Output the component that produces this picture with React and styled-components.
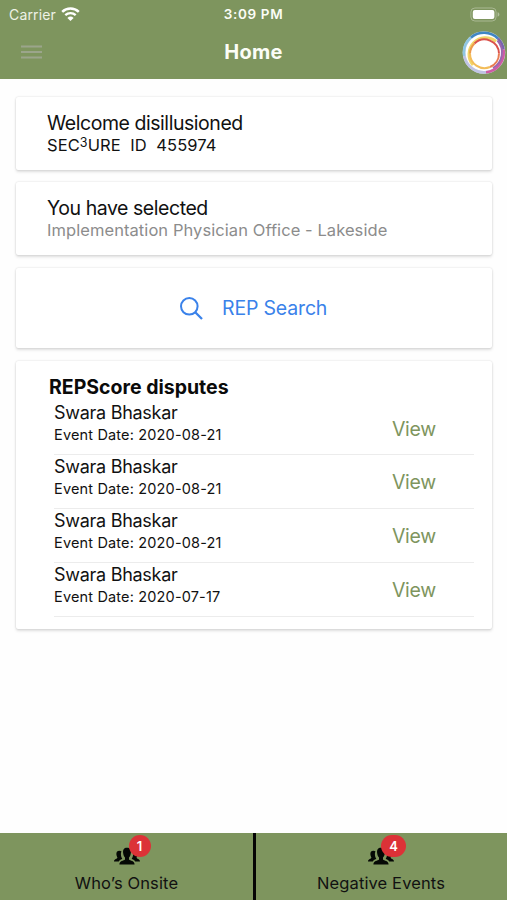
import React, { Component } from 'react'
import styled, { createGlobalStyle } from 'styled-components'

// MOCK-DATA
const disputes = [
  { id: 1, name: 'Swara Bhaskar', date: '2020-08-21' },
  { id: 2, name: 'Swara Bhaskar', date: '2020-08-21' },
  { id: 3, name: 'Swara Bhaskar', date: '2020-08-21' },
  { id: 4, name: 'Swara Bhaskar', date: '2020-07-17' },
]

const GlobalStyle = createGlobalStyle`
  * {
    box-sizing: border-box;
  }
  body {
    margin: 0;
    background: #fefefe;
    color: #111;
    font-family: Inter, 'Liberation Sans', sans-serif;
  }
`

const Screen = styled.div`
  display: flex;
  flex-direction: column;
  width: 100%;
  height: 100vh;
  overflow: hidden;
`

const Header = styled.header`
  height: 79px;
  flex: none;
  background: #7e955e;
  color: #fbfdf6;
`

const StatusBar = styled.div`
  display: grid;
  grid-template-columns: 1fr auto 1fr;
  align-items: center;
  height: 27px;
  line-height: 27px;
`

const Carrier = styled.div`
  display: flex;
  align-items: center;
  gap: 5px;
  padding-left: 9px;
  font-size: 14px;
  letter-spacing: 0.15px;
  color: #eef2e6;
`

const Time = styled.div`
  padding-top: 1px;
  font-size: 13.5px;
  font-weight: 600;
  letter-spacing: 0.65px;
`

const BatteryWrap = styled.div`
  display: flex;
  justify-content: flex-end;
  padding-right: 6px;
`

const NavBar = styled.div`
  display: grid;
  grid-template-columns: 1fr auto 1fr;
  align-items: center;
  height: 50px;
`

const MenuIcon = styled.svg`
  display: block;
  margin-left: 20px;
`

const Title = styled.h1`
  margin: 0;
  font-size: 20px;
  font-weight: 700;
  line-height: 24px;
  letter-spacing: 0.3px;
`

const Ring = styled.svg`
  display: block;
  justify-self: end;
  margin: 1px 1px 0 0;
`

const Content = styled.main`
  flex: 1;
  display: flex;
  flex-direction: column;
  padding: 18px 15px 0 16px;
`

const Card = styled.section`
  height: ${props => props.height}px;
  margin-bottom: ${props => props.gap || 0}px;
  padding: ${props => props.pad || '0'};
  background: #fff;
  border-radius: 2px;
  box-shadow: 0 0 2px rgba(0, 0, 0, 0.16), 0 2px 3px rgba(0, 0, 0, 0.12);
`

const Heading = styled.div`
  font-size: 19.5px;
  line-height: 24px;
  letter-spacing: -0.45px;
`

const Secure = styled.div`
  font-size: 16.5px;
  line-height: 20px;
  letter-spacing: 0.1px;
  white-space: pre;

  sup {
    font-size: 12.5px;
    line-height: 0;
    vertical-align: 4px;
  }
`

const Location = styled.div`
  font-size: 16.5px;
  line-height: 20px;
  letter-spacing: 0.07px;
  color: #8c8c8c;
`

const SearchLink = styled.div`
  display: flex;
  align-items: center;
  height: 100%;
  padding-left: 163px;
  gap: 18px;
  font-size: 19.5px;
  letter-spacing: -0.17px;
  color: #3a82ea;
`

const DisputeTitle = styled.h2`
  margin: 0 0 2px 33px;
  font-size: 19.5px;
  font-weight: 700;
  line-height: 24px;
  color: #0a0a0a;
`

const DisputeRow = styled.div`
  display: flex;
  justify-content: space-between;
  height: 53.9px;
  margin: 0 18px 0 38px;
  border-bottom: 1px solid #ececec;
`

const DisputeName = styled.div`
  padding-top: 1px;
  font-size: 18px;
  line-height: 22px;
  letter-spacing: -0.28px;
`

const DisputeDate = styled.div`
  font-size: 14.5px;
  line-height: 22px;
  letter-spacing: 0.16px;
`

const View = styled.div`
  width: 82px;
  padding-top: 15.5px;
  font-size: 19.5px;
  line-height: 24px;
  letter-spacing: -0.35px;
  color: #7e955e;
`

const Footer = styled.footer`
  display: grid;
  grid-template-columns: 253px 1fr;
  flex: none;
  height: 67px;
  background: #7e955e;
`

const Tab = styled.div`
  display: flex;
  flex-direction: column;
  align-items: center;
  padding-top: 14px;
  border-left: ${props => (props.divided ? '3px solid #050505' : 'none')};
  padding-right: ${props => (props.divided ? '1px' : '0')};
`

const IconWrap = styled.div`
  position: relative;
  width: 26px;
  height: 19px;
  margin-bottom: 6px;
`

const Badge = styled.span`
  position: absolute;
  top: -12px;
  left: ${props => (props.wide ? 13 : 15)}px;
  width: ${props => (props.wide ? 25 : 22)}px;
  height: 22px;
  border-radius: 11px;
  background: #dc3237;
  color: #fff;
  font-size: 13px;
  font-weight: 600;
  line-height: 22px;
  text-align: center;
`

const TabLabel = styled.div`
  font-size: 16.5px;
  line-height: 22px;
  letter-spacing: 0.12px;
`

const WifiIcon = () => (
  <svg width="19" height="15" viewBox="0 0 19 15">
    <path d="M1.2 4.8A12 12 0 0 1 17.8 4.8" fill="none" stroke="#fff" strokeWidth="2.5" />
    <path d="M4.3 8.1A7.6 7.6 0 0 1 14.7 8.1" fill="none" stroke="#fff" strokeWidth="2.3" />
    <path d="M6.4 10.9A4.5 4.5 0 0 1 12.6 10.9L9.5 14Z" fill="#fff" />
  </svg>
)

const BatteryIcon = () => (
  <svg width="31" height="15" viewBox="0 0 31 15">
    <rect x="0.9" y="1" width="25.2" height="13" rx="4" fill="none" stroke="#a9b892" strokeWidth="1" />
    <rect x="2.8" y="3" width="21.6" height="9" rx="2" fill="#fff" />
    <path d="M27.6 5.3C30 6 30 9 27.6 9.7Z" fill="#b1bf9c" />
  </svg>
)

const PeopleIcon = () => (
  <svg width="26" height="18" viewBox="0 0 26 18">
    <g fill="#050805">
      <path d="M5.500 3.700C3 3.700 2.200 5.300 2.400 7.500c.2 1.600.7 2.300 1 3C3.400 12.200 0 11.800 0 14.500h4.800c.5-1.600 2.800-2 3.500-2.700C7.400 10.500 6.800 9 6.900 6.800c0-1.100.2-1.800.6-2.300-.5-.5-1.200-.8-2-.8Z" />
      <path d="M20.500 3.700c2.500 0 3.300 1.600 3.100 3.800-.2 1.600-.7 2.300-1 3 0 1.700 3.400 1.300 3.400 4h-4.800c-.5-1.600-2.800-2-3.500-2.700.9-1.300 1.500-2.800 1.400-5 0-1.100-.2-1.800-.6-2.300.5-.5 1.200-.8 2-.8Z" />
      <path d="M13 .8c-3.100 0-4.200 2.100-3.900 4.900.2 2.400 1 3.700 1.900 4.900v1.900c-1.100 1.500-5.600 1-5.600 5h15.200c0-4-4.500-3.500-5.600-5v-1.900c.9-1.200 1.700-2.500 1.900-4.900.3-2.800-.8-4.900-3.900-4.900Z" />
    </g>
  </svg>
)

const Dispute = ({ name, date }) => (
  <DisputeRow>
    <div>
      <DisputeName>{name}</DisputeName>
      <DisputeDate>Event Date: {date}</DisputeDate>
    </div>
    <View>View</View>
  </DisputeRow>
)

class App extends Component {
  render() {
    return (
      <Screen>
        <GlobalStyle />
        <Header>
          <StatusBar>
            <Carrier>
              Carrier
              <WifiIcon />
            </Carrier>
            <Time>3:09 PM</Time>
            <BatteryWrap>
              <BatteryIcon />
            </BatteryWrap>
          </StatusBar>
          <NavBar>
            <MenuIcon width="23" height="16" viewBox="0 0 23 16">
              <path d="M1 2.500H22M1 8H22M1 13.500H22" stroke="#9ba58b" strokeWidth="2" />
            </MenuIcon>
            <Title>Home</Title>
            <Ring width="44" height="44" viewBox="0 0 44 44">
              <circle cx="22" cy="21.500" r="21.300" fill="#d3dde2" />
              <circle cx="22" cy="21.500" r="18.500" fill="#fff" />
              <g fill="none" strokeWidth="2.600">
                <path d="M2.300 25A20 20 0 0 1 9 6.500" stroke="#8fc6e4" />
                <path d="M9 6.500A20 20 0 0 1 36 7.500" stroke="#3f86c4" />
                <path d="M36 7.500A20 20 0 0 1 41.500 18.500" stroke="#7766ae" />
                <path d="M41.500 18.500A20 20 0 0 1 24 41.300" stroke="#cf5ba5" />
                <path d="M24 41.300A20 20 0 0 1 2.300 25" stroke="#bfc3e4" />
              </g>
              <path d="M35.500 9.500A18 18 0 0 1 31 37" fill="none" stroke="#9a66ae" strokeWidth="2" />
              <path d="M11 34A16.500 16.500 0 0 1 34 10.500" fill="none" stroke="#f2d568" strokeWidth="3" />
              <circle cx="22.500" cy="22.500" r="14" fill="#fff" />
              <g fill="none" strokeWidth="2">
                <path d="M12.500 12.500A14.500 14.500 0 0 1 37 22.500" stroke="#db514a" />
                <path d="M37 22.500A14.500 14.500 0 0 1 28 36" stroke="#e87b52" />
                <path d="M28 36A14.500 14.500 0 0 1 8 22.500" stroke="#f3bd5a" />
                <path d="M8 22.500A14.500 14.500 0 0 1 12.500 12.500" stroke="#ec9a4b" />
              </g>
            </Ring>
          </NavBar>
        </Header>

        <Content>
          <Card height={73} gap={12} pad="14px 0 0 31px">
            <Heading>Welcome disillusioned</Heading>
            <Secure>
              SEC<sup>3</sup>URE{'  '}ID{'  '}455974
            </Secure>
          </Card>
          <Card height={73} gap={13} pad="14px 0 0 31px">
            <Heading>You have selected</Heading>
            <Location>Implementation Physician Office - Lakeside</Location>
          </Card>
          <Card height={80} gap={13}>
            <SearchLink>
              <svg width="25" height="25" viewBox="0 0 25 25">
                <circle cx="10.300" cy="10.300" r="8.300" fill="none" stroke="#3a82ea" strokeWidth="2" />
                <path d="M16 16L23 23" stroke="#3a82ea" strokeWidth="2.300" />
              </svg>
              REP Search
            </SearchLink>
          </Card>
          <Card height={268} pad="14px 0 0">
            <DisputeTitle>REPScore disputes</DisputeTitle>
            {disputes.map(item => (
              <Dispute key={item.id} name={item.name} date={item.date} />
            ))}
          </Card>
        </Content>

        <Footer>
          <Tab>
            <IconWrap>
              <PeopleIcon />
              <Badge>1</Badge>
            </IconWrap>
            <TabLabel>Who’s Onsite</TabLabel>
          </Tab>
          <Tab divided>
            <IconWrap>
              <PeopleIcon />
              <Badge wide>4</Badge>
            </IconWrap>
            <TabLabel>Negative Events</TabLabel>
          </Tab>
        </Footer>
      </Screen>
    )
  }
}

export default App
